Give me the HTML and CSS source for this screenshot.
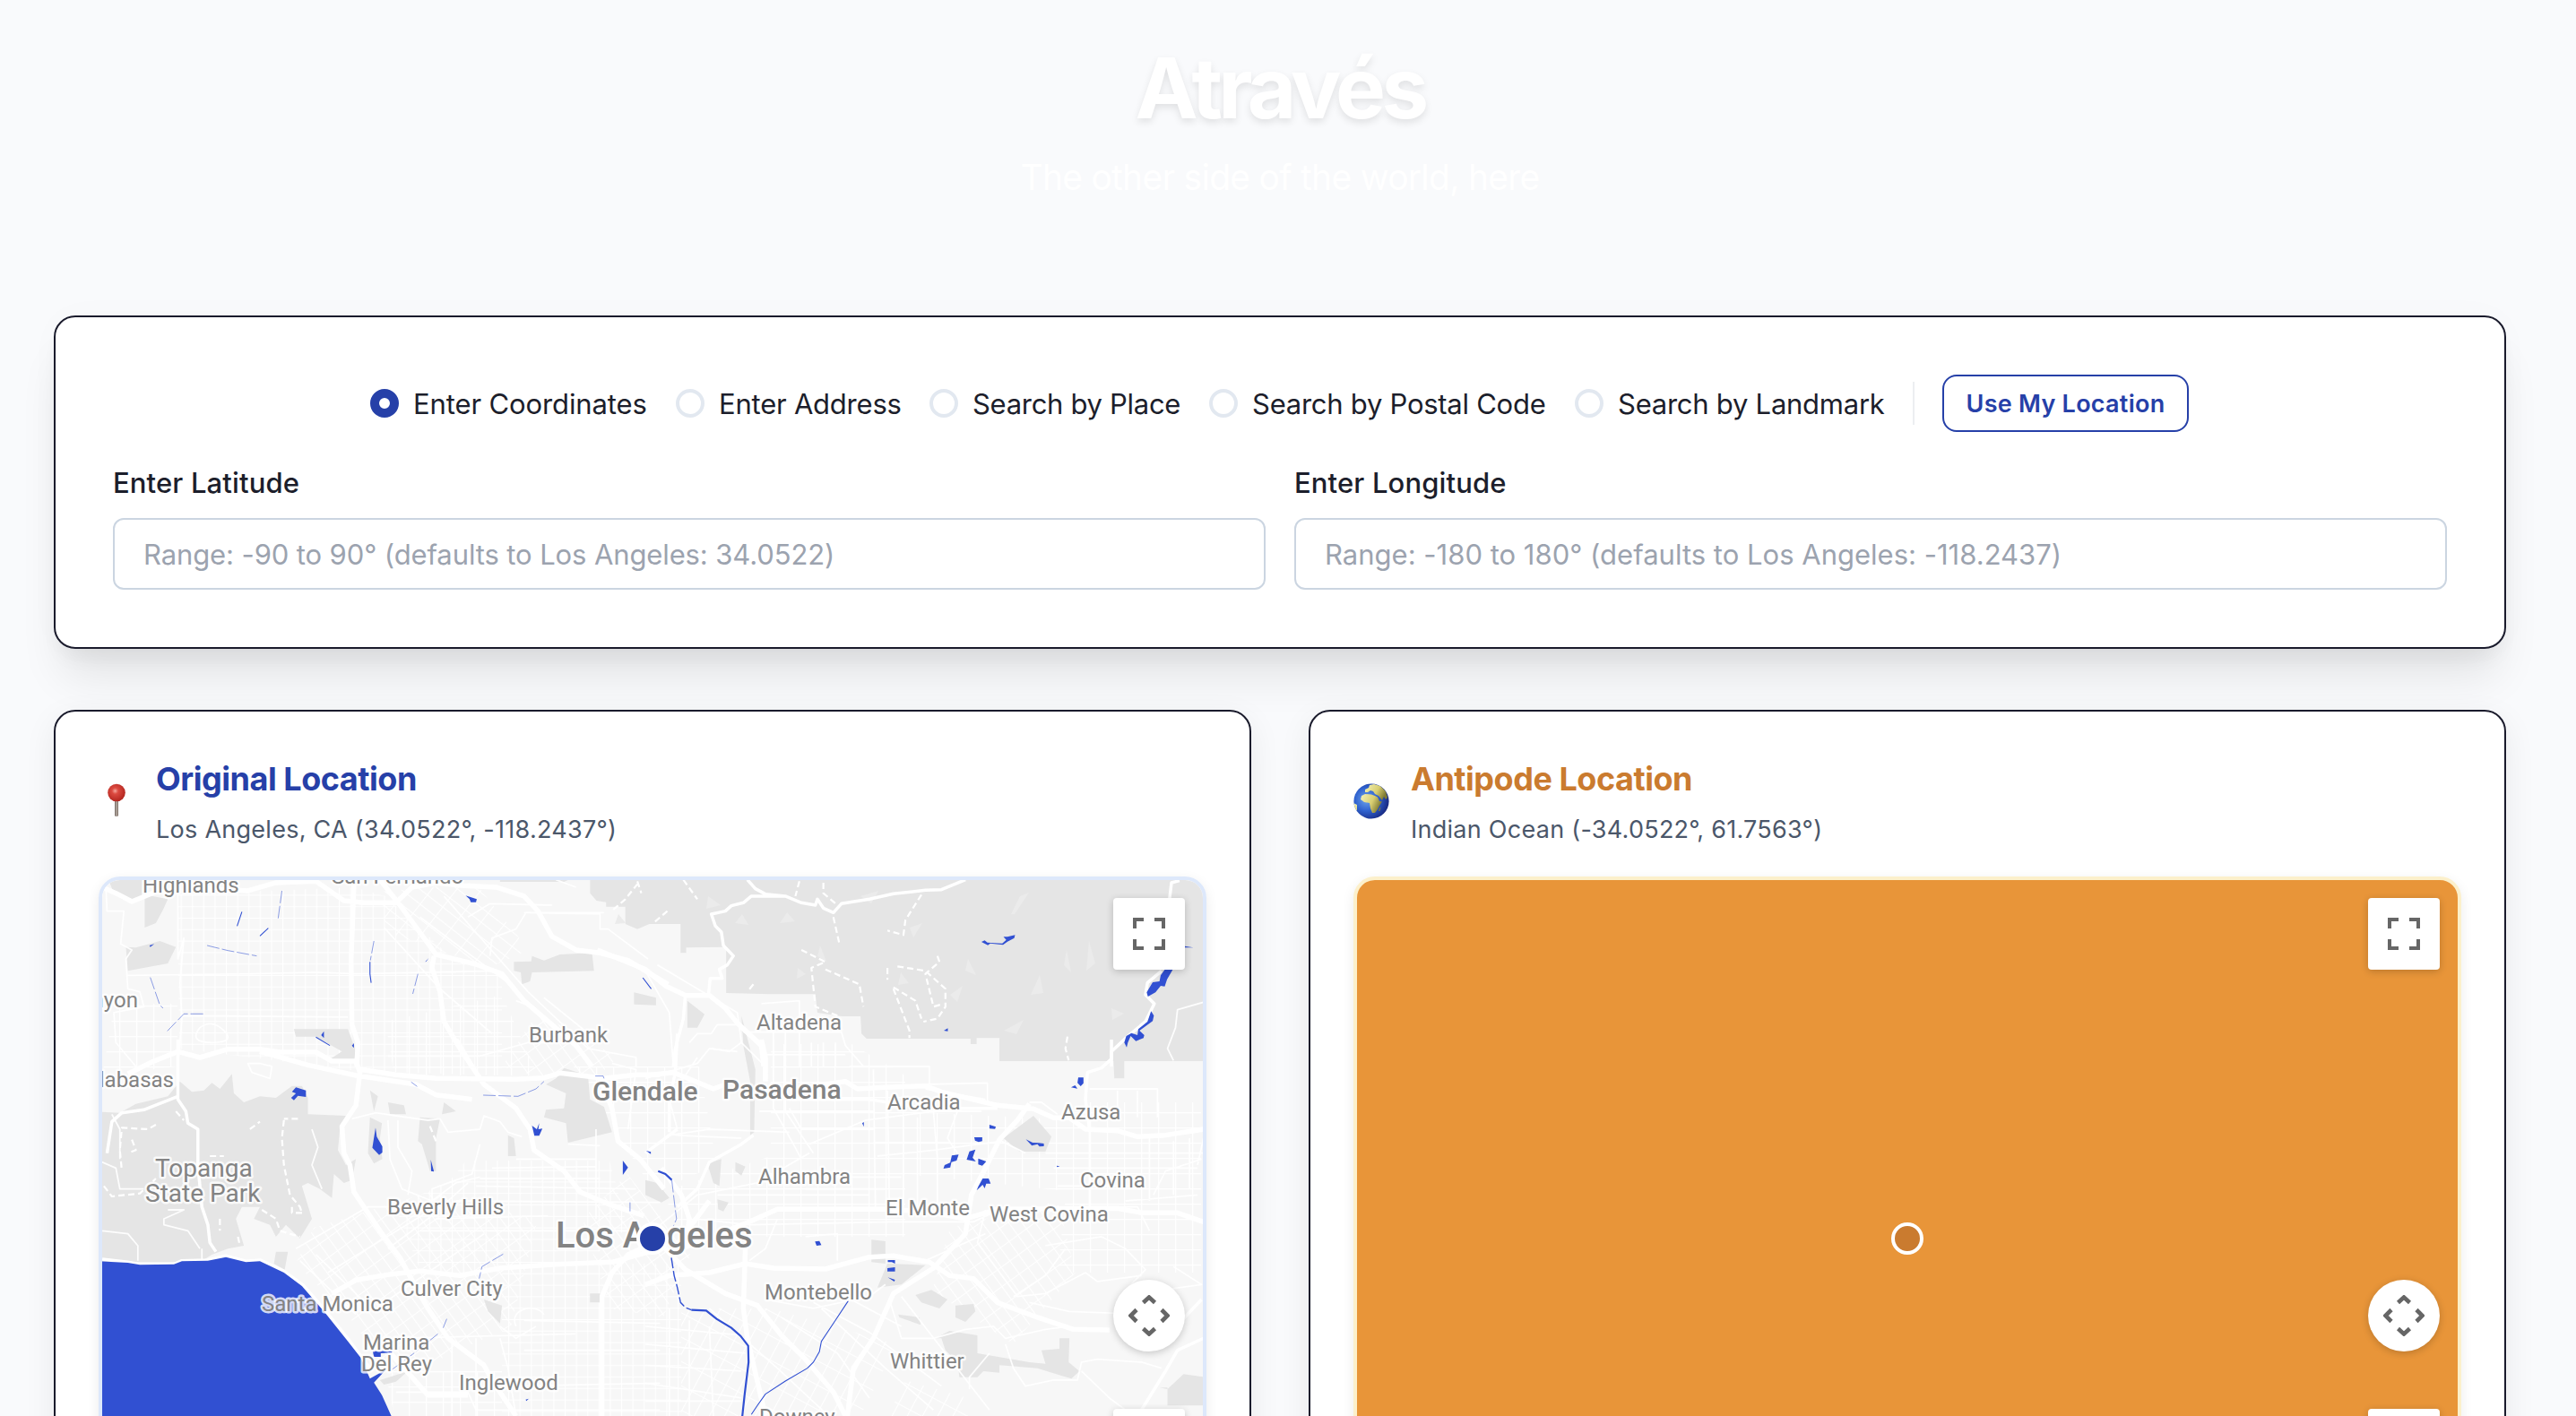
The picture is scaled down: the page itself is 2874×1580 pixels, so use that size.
FILE: index.html
```html
<!DOCTYPE html>
<html lang="en">
<head>
<meta charset="utf-8">
<title>Através</title>
<link rel="stylesheet" href="styles.css">
</head>
<body>
<header class="hero">
  <h1 class="hero-title">Através</h1>
  <p class="hero-sub">The other side of the world, here</p>
</header>
<main class="main">
  <section class="card search">
    <div class="modes">
      <label class="mode mode-coords"><span class="radio radio-on"></span><span>Enter Coordinates</span></label>
      <label class="mode mode-address"><span class="radio"></span><span>Enter Address</span></label>
      <label class="mode mode-place"><span class="radio"></span><span>Search by Place</span></label>
      <label class="mode mode-postal"><span class="radio"></span><span>Search by Postal Code</span></label>
      <label class="mode mode-landmark"><span class="radio"></span><span>Search by Landmark</span></label>
      <span class="divider"></span>
      <button class="locate" type="button">Use My Location</button>
    </div>
    <div class="fields">
      <div class="field">
        <label class="field-label" for="lat">Enter Latitude</label>
        <input class="field-input lat" id="lat" placeholder="Range: -90 to 90° (defaults to Los Angeles: 34.0522)">
      </div>
      <div class="field">
        <label class="field-label" for="lng">Enter Longitude</label>
        <input class="field-input lng" id="lng" placeholder="Range: -180 to 180° (defaults to Los Angeles: -118.2437)">
      </div>
    </div>
  </section>

  <div class="places">
    <section class="card place">
      <div class="place-head">
        <svg class="place-icon" viewBox="0 0 40 40">
          <defs>
            <radialGradient id="pinHead" cx=".42" cy=".4" r=".6"><stop offset="0" stop-color="#f5a79c"/><stop offset=".3" stop-color="#dc4a40"/><stop offset="1" stop-color="#b3261f"/></radialGradient>
            <linearGradient id="needle"><stop offset="0" stop-color="#6d635c"/><stop offset=".5" stop-color="#b9aea6"/><stop offset="1" stop-color="#77695f"/></linearGradient>
          </defs>
          <rect x="18" y="17" width="4" height="20" rx="1.6" fill="url(#needle)"/>
          <circle cx="20" cy="10.500" r="9.800" fill="url(#pinHead)"/>
        </svg>
        <div class="place-text">
          <h2 class="place-title original">Original Location</h2>
          <p class="place-sub">Los Angeles, CA (34.0522°, -118.2437°)</p>
        </div>
      </div>
      <div class="map map-original">
        <svg class="map-canvas" viewBox="114 982 1228 598" preserveAspectRatio="xMidYMin slice">
          <defs>
            <pattern id="grid" width="12.6" height="12.8" patternUnits="userSpaceOnUse"><path d="M0 0H12.6M0 0V12.8" stroke="#fff" stroke-width="2.2" fill="none"/></pattern>
            <pattern id="gridWide" width="19" height="17" patternUnits="userSpaceOnUse"><path d="M0 0H19M0 0V17" stroke="#fff" stroke-width="2.4" fill="none"/></pattern>
            <pattern id="gridTilt" width="12" height="18" patternUnits="userSpaceOnUse" patternTransform="rotate(-36)"><path d="M0 0H12M0 0V18" stroke="#fff" stroke-width="2.2" fill="none"/></pattern>
            <pattern id="gridDiag" width="13" height="22" patternUnits="userSpaceOnUse" patternTransform="rotate(-52)"><path d="M0 0H13M0 0V22" stroke="#fff" stroke-width="2.2" fill="none"/></pattern>
            <pattern id="gridSouth" width="15" height="24" patternUnits="userSpaceOnUse" patternTransform="rotate(28)"><path d="M0 0H15M0 0V24" stroke="#fff" stroke-width="2.2" fill="none"/></pattern>
          </defs>
          <rect x="114" y="982" width="1228" height="598" fill="#f7f7f7"/>

          <!-- street grids -->
          <path fill="url(#grid)" d="M198 998L395 990L430 1000L500 1065L560 1090V1200L400 1195L200 1170Z"/>
          <path fill="url(#gridWide)" d="M128 1120H198V1190L114 1200ZM560 1110L600 1200H440L430 1140Z"/>
          <path fill="url(#gridDiag)" d="M425 995L530 985L590 1060L545 1080L490 1060L430 1040Z"/>
          <path fill="url(#grid)" d="M520 1295H680L700 1370L640 1420H470L440 1345L500 1320Z"/>
          <path fill="url(#gridTilt)" d="M350 1370L480 1330L600 1360L570 1480L440 1540L390 1470L330 1410Z"/>
          <path fill="url(#gridTilt)" d="M650 1360L700 1310L770 1400L740 1470L680 1460Z"/>
          <path fill="url(#grid)" d="M560 1410H760V1580H560Z"/>
          <path fill="url(#gridWide)" d="M430 1530H560V1580H440ZM860 1165H950L1010 1200V1380H760L740 1330L860 1290ZM1200 1230H1340V1420H1180ZM1010 1240L1200 1250V1330L1010 1310ZM640 1190H780L800 1300L730 1330Z"/>
          <path fill="url(#gridTilt)" d="M1060 1370L1180 1340L1200 1420L1130 1500L1040 1440Z"/>
          <path fill="url(#gridSouth)" d="M760 1460L860 1460L1000 1500L960 1580H760ZM1010 1540L1080 1560V1580H990Z"/>
          <path fill="url(#gridTilt)" d="M600 1130L690 1180L650 1215L560 1190Z"/>

          <!-- parks and open land -->
          <g class="park">
            <g transform="translate(40 770) scale(.4464 .3333)">
              <path d="M180 630H266L265 690L240 712L215 700L195 680ZM272 685L330 700L318 735L300 780L272 795ZM225 860L250 862L310 840L350 860L330 915L230 940ZM1160 630H1340L1320 642H1160ZM1195 910L1238 908L1240 890L1270 905L1310 885L1390 880L1395 940L1240 945L1235 975L1215 985L1212 945L1195 940ZM1495 1012L1550 1030V1055L1495 1052ZM645 1135H780L800 1210L795 1245L735 1235L765 1210L700 1160L650 1160Z"/>
            </g>
            <g transform="translate(720 770) scale(.4464 .3333)">
              <path d="M-138 630H1400V1242H885V1165H828V1185H813V1167H553L540 1150L538 1092H490L430 1080L425 1018H310L202 1014V860L102 862V880H88V783H10L-20 800L-50 783V725H-98V710L-122 705L-138 680ZM105 1040L148 1085L130 1130H105Z"/>
            </g>
            <g transform="translate(40 1160) scale(.4464 .3333)">
              <path d="M160 242L210 245L250 215L330 190L360 140L390 175L420 170L440 145L460 165L490 115L495 180L520 210L560 190L600 195L640 155L665 155L680 195V250L775 255L760 300L755 370L775 420L800 400L790 470L770 480L745 450L740 530L710 500L680 480L665 490L690 600L660 665L625 620L600 660L585 620L545 600L560 560L515 560L500 600L520 690L480 700L440 720L410 745H160ZM835 260L865 280L860 330L866 400L845 415L830 380ZM960 260L1010 265L1000 330V440L985 440L965 350L955 340ZM1320 95L1380 120L1385 200L1420 225L1440 310L1330 345L1325 280L1270 260L1275 235L1320 230L1325 180L1275 150L1300 130ZM1180 320L1195 330L1200 390H1180ZM1120 870L1165 890L1160 950L1130 910ZM1385 850H1410V880H1385ZM600 710L630 710L622 770L595 750ZM835 170L855 190L845 240ZM880 210L920 220L925 250H885ZM1020 210L1050 240L1015 250ZM860 1140L930 1110L900 1145L870 1155Z"/>
            </g>
            <g transform="translate(720 1160) scale(.4464 .3333)">
              <path d="M565 670L600 675V750L565 745ZM605 750L700 755L640 820L580 830ZM895 330L970 255L1015 325L1000 375H935ZM675 855L715 838L755 870L735 900L690 880ZM775 890L820 885L825 910L800 945L775 930ZM632 920L685 930L688 955L635 930ZM740 1000L725 1000L760 975L830 990V1050L960 1080L1000 1085L990 1040L1035 1035V1000H1060L1058 1080L1085 1110L1065 1135L1040 1125L980 1100L885 1090V1115L845 1110L830 1130H785L780 1080L750 1040ZM1305 1170L1345 1120L1400 1130V1225H1305V1165H1285ZM155 415L190 400L185 490L170 480ZM225 410L250 425L240 455L225 440ZM180 535L208 545L195 575L182 568ZM240 -80L252 -20L275 100L272 310L262 320L262 140L245 20ZM0 470L30 480L60 530L40 545L0 520ZM1170 70H1197V130H1172Z"/>
            </g>
          </g>

          <!-- relief shading in the mountains -->
          <path class="relief" d="M790 1000l14 10-16 4zM870 1030l8-12 9 10zM915 1055l7 18-10-6zM960 1000l20-6-8 14zM1005 1085l9 12-12 2zM1128 1020l10-20 10-4-16 24zM1080 1070l9 18-12-5zM1190 1060l5 25-8-8zM1215 1050l7 25-10 8zM1060 1110l14-10-6 18zM890 1080l9 7-10 5zM1150 1110l10-22 4 20zM1240 1125l14 6-13 7zM820 1030l8-10 7 12zM1015 1035l14-5-10 16zM1120 1150l22-12-8 16zM690 1020l8 10-12 1z"/>

          <!-- minor roads -->
          <g class="road road-minor">
            <g transform="translate(40 770) scale(.4464 .3333)">
              <path d="M175 660L178 740L220 740L212 850L240 870L225 900L230 1000L260 1010L270 1060L195 1080L200 1180L250 1260M355 635V900L370 830L360 980L365 1100L355 1260M230 955L540 950L700 945L800 950L1150 940M365 1090L780 1095M1135 890L1140 830L1200 800L1225 745H1420M1080 760L1135 715L1290 720M1300 635L1350 660M1220 745L1410 750V800L1430 800L1530 900M1150 940L1240 1060L1200 1040M870 795L1010 1000L1140 1150M960 760L1180 980M1020 690L1230 1010M410 1130Q440 1100 470 1140T440 1180T410 1130M880 1225H1110L1230 1180H1400M1230 1010L1380 1200L1500 1230V1260M1270 1030L1400 1170"/>
            </g>
            <g transform="translate(720 770) scale(.4464 .3333)">
              <path d="M0 940L60 1080L70 1260M30 920L130 1000L230 1080L240 1180L300 1260M110 1180L130 1150L165 1150M165 1150L180 1120L230 1120M165 1200L210 1210L240 1180M245 1145H490L500 1190L545 1260M290 1050L385 1040V1140M300 1221H500M320 1145V1260M350 1145V1260M385 1145V1260M415 1180V1260M445 1180V1260M475 1180V1260M1395 1045L1330 1070L1325 1130L1305 1200L1320 1240"/>
            </g>
            <g transform="translate(40 1160) scale(.4464 .3333)">
              <path d="M255 740V690L230 650L166 640M210 400V300L190 250M415 700V740M165 410L200 430L210 500L270 500M330 570L370 570L320 600V620L380 640L410 700M690 300L705 360L690 420L715 500M790 265L850 245L900 255L980 270L1010 265L1030 310L1110 300L1120 255L1160 275L1180 310L1215 325M880 270L885 400L915 500L990 540M905 270V360L940 440L930 520M650 700L740 630L830 560H970L1050 480L1110 460M1110 350L1090 450L990 500V540M1110 465L1410 465M1140 430L1400 425M1200 400H1400M1100 490L1500 500M1050 540L1560 545M1000 600L1280 590M960 640L1300 640M880 700L980 600L1080 480M730 780L1000 560M850 900L1120 650M700 720L830 890M660 740L800 920M900 1000L1350 985M1040 1260V1000M1100 1260V1000M1160 1000L1180 1100L1200 1260M1220 1040H1560M1220 940L1560 950M900 1180H1080L1100 1240H1560M1190 1160L1560 1150M1330 350L1410 355M1440 80L1500 100L1480 300M1300 640L1560 640M1400 300V600M1200 960C1180 900 1250 880 1270 920M1160 960L1200 1000L1250 960M530 80L540 110L585 130L590 90L560 80Z"/>
            </g>
            <g transform="translate(720 1160) scale(.4464 .3333)">
              <path d="M0 130L130 80L160 30L230 40M75 320L240 330M80 300L60 200L130 60M60 320L160 300L360 310M320 0V230L370 350L390 400M350 0V240L420 380M360 230L390 300H570M285 240H570M510 90H710V150M570 100L575 560M605 170L610 560M410 350L550 270L720 240H840M780 240L755 330L780 380M580 390L720 370L890 340L950 380M645 250V560M680 260V560M720 240L730 400V560M570 345L760 345M470 460H640M400 500H600M0 660L130 520L280 480L410 380M180 520H560M120 600L260 620L620 610M330 600L300 700L260 740M400 660L480 650V740M620 610H820L900 560M700 150L855 145V210M700 165L850 200M1110 300V560L1230 560L1260 640M1110 165H1280V260M1180 170V260M1230 170V260M1200 540L1380 520M1270 520L1300 440L1390 400M1000 380H1395M1020 430H1380M1030 490H1230M960 210L990 210L1030 250M1320 340V520M1360 330V500M1260 330V540M1395 330L1380 420M850 570L830 680L930 860L1000 850L1100 780L1130 810L1240 790M1000 690L1140 660L1200 700L1250 770L1200 840M1230 850L1390 820L1320 760M960 880L1060 910L1250 920M920 860L1000 790L1050 700M700 740L800 680L850 650M610 870L640 1000H720L800 970L870 960L900 1000L1000 970L1060 960M860 1050L810 1130V1170M900 1020L920 1100L950 1160L1020 1140L1080 1140L1090 1080L1130 1070L1240 1080L1290 1100M1090 1110L1160 1200L1220 1260M640 860L750 1050L860 1240M160 900L330 1100L450 1250M0 960L240 990M0 1020L250 1050M0 1090L240 1110M0 1150L240 1200M0 1210H240M60 900V1260M110 940V1260M160 960L170 1260M420 880L560 980L740 1160M440 900L600 1100L720 1240M500 860L640 960M340 930L480 1050L560 1200M300 870L420 900L560 860L600 820"/>
            </g>
          </g>

          <!-- trails -->
          <g class="road trail">
            <g transform="translate(720 770) scale(.4464 .3333)">
              <path d="M95 635L130 700M385 640L375 690M445 645V680L480 720M55 740L20 780M690 685L650 770L645 820L605 805M470 760L485 850M390 870L450 910L415 930L425 1060L480 1090M450 935L535 985L545 1060M605 930V970M620 1000L660 1140L660 1165M630 925L700 940L750 1000V1060L730 1100L695 1110M730 890L735 910L700 950L720 1060L745 1050M620 995L675 1040L690 1100M1055 1160L1050 1200L1058 1240M270 985L255 1010M-20 640L-10 680M-80 735L-50 700L-20 650"/>
            </g>
            <g transform="translate(40 1160) scale(.4464 .3333)">
              <path d="M300 285L280 300L215 295L210 370L215 440M240 335L250 370L230 380M170 490L190 525L260 515L300 465M620 270L615 330L620 420L635 520L660 560L665 580M655 265H620M535 300L560 275M350 240L370 270M640 560L640 580L670 580M565 570L600 600L610 640L660 660M460 600V640M435 390H470M505 660L510 690M985 290L1000 340"/>
            </g>
          </g>

          <!-- highways -->
          <g class="road road-mid">
            <g transform="translate(720 770) scale(.4464 .3333)">
              <path d="M255 635L275 665L300 683L350 690L390 712L425 720L430 700L445 730L470 745L490 715L560 700L620 682L700 670L740 668L800 635M350 690H300L265 690L245 712L215 722L200 740L165 750L175 790L190 810L195 855L220 890L205 920L185 935L192 965L162 965L158 1020M1310 700L1315 645L1335 638M1290 940L1255 980L1250 1020L1272 1050L1250 1110L1205 1160L1165 1210V1260M100 1020L95 1100L75 1200L70 1260"/>
            </g>
            <g transform="translate(40 1160) scale(.4464 .3333)">
              <path d="M355 0V200L375 240L380 280L405 300V420L415 560L430 620L435 680L450 710M355 190L270 235L215 245L190 275L178 380M166 735L230 745L260 752L345 752L365 740L430 738L475 724L525 742L562 738L620 775L668 822L722 905L782 1005L835 1100"/>
            </g>
            <g transform="translate(720 1160) scale(.4464 .3333)">
              <path d="M80 -20L75 110L60 200V310M1165 0V65L1140 95L1105 110L1100 200L1110 300M270 320L240 350L160 410L130 500L80 560M0 380L80 300M1395 1000L1330 1040L1300 1110L1240 1240M1320 970L1390 870M360 200L560 200L700 230L880 230"/>
            </g>
          </g>
          <g class="road road-major">
            <g transform="translate(40 770) scale(.4464 .3333)">
              <path d="M166 660L200 680L240 708L300 675L360 670M430 665L530 672L600 645L700 640L770 705L820 712H900L940 660L1000 645L1070 655L1150 660L1220 690L1255 740L1290 825L1350 870L1410 880L1480 905L1580 985M795 650L788 900L790 1120L805 1180L802 1260M860 635L910 720L1000 885L1100 918L1165 950L1220 1040L1290 1120L1350 1190L1390 1260M995 890L990 930L1010 1010L1020 1110L1060 1200L1090 1260"/>
            </g>
            <g transform="translate(720 770) scale(.4464 .3333)">
              <path d="M-120 870L0 935L50 990L100 1022H160L200 1065L230 1115L290 1190L296 1260"/>
            </g>
            <g transform="translate(40 1160) scale(.4464 .3333)">
              <path d="M230 115L290 75L355 40L410 60L480 32L560 32L610 42L700 42L740 72L800 72L810 110L800 220L765 290L770 380L785 420L795 510L860 640L910 730L950 830L980 900L1030 1000L1120 1090L1140 1140L1200 1260M810 100L900 118L1000 130L1200 133L1270 128L1310 112L1420 130L1500 118H1560M560 40L680 85L800 120L950 150L1000 185L1090 200M1050 0L1090 90L1120 150L1200 230L1235 300L1245 370L1320 440L1360 510L1430 550L1520 590M1410 130L1440 230L1455 340L1510 400L1570 500M740 850L800 805L890 785L960 775L1060 790L1160 765L1300 752L1440 745L1560 700M1560 670L1480 720L1440 780L1415 860V1260M880 1040L980 1190H1080"/>
            </g>
            <g transform="translate(720 1160) scale(.4464 .3333)">
              <path d="M290 0L300 60V140M0 120L70 110L170 165L200 150M420 155L500 140L530 165L600 160L700 155L740 175L880 220L970 232L1020 262H1060L1100 300L1180 305L1230 325L1300 320L1395 300M40 430L90 520L110 600L100 700M960 215L930 270L885 335L850 430L815 520L800 650L720 765L620 850L570 1000L520 1100L505 1260M0 820L60 790L160 780L250 750L320 765L450 768L560 728L620 724L710 745L760 790L820 800L880 880L980 930L1070 970L1160 972M90 700L260 610L330 568H600L700 575L800 600L880 568L1180 565L1240 580L1330 580L1395 610M50 700L100 770L200 850L280 890L340 990L400 1070L470 1180L500 1260M250 700L245 900L255 1000L300 1260M60 720L160 540"/>
            </g>
          </g>

          <!-- water -->
          <g class="water">
            <g transform="translate(40 1160) scale(.4464 .3333)">
              <path d="M160 742L230 747L260 754L345 752L365 742L430 740L475 728L525 745L560 742L620 780L665 825L720 910L780 1010L812 1065L835 1135L875 1105L845 1148L865 1190L890 1265H160ZM650 160L675 170V192L655 188L645 203L638 195L650 180L640 175ZM849 295L852 325L866 358V378L858 386L841 362ZM987 402L995 442L988 440ZM1240 288L1252 300L1258 280L1256 300L1266 298L1258 322H1246ZM1467 405L1480 428L1467 453ZM842 1043L890 1042V1048L862 1050V1062H845ZM1224 1205L1232 1202L1226 1210ZM1525 372L1537 376L1537 383Z"/>
            </g>
            <g transform="translate(40 770) scale(.4464 .3333)">
              <path d="M1074 688L1102 700L1100 710H1087L1084 700ZM284 855L296 850L286 860ZM713 1155L720 1142V1165ZM973 910L982 897L976 908ZM790 1190L795 1182V1198Z"/>
            </g>
            <g transform="translate(720 770) scale(.4464 .3333)">
              <path d="M840 843L848 838L855 845L892 848L902 836L895 826H905L924 820L922 830L905 842L894 853L862 848L856 854ZM1298 936H1318L1304 968L1298 992L1288 990L1275 1012L1256 1026L1253 1012L1268 978L1285 975L1288 955ZM1264 1075L1271 1090L1268 1108L1235 1140L1247 1155L1245 1165L1226 1175L1213 1158L1206 1180L1203 1196L1197 1180L1202 1158L1215 1148L1230 1155L1232 1135L1255 1110ZM746 1140L756 1132V1142ZM1348 857L1370 862L1348 862Z"/>
            </g>
            <g transform="translate(720 1160) scale(.4464 .3333)">
              <path d="M424 676L435 674L440 688L428 690ZM606 738H624V750L616 745H606ZM605 765L624 762V776H605ZM606 796L624 804L622 810ZM860 285L876 292L874 299L860 298ZM822 327H842V340L833 343L824 338ZM810 374L825 368L818 395L826 408L803 402ZM832 398L852 408L842 422L832 418ZM766 388L783 385L778 405L765 410L762 428L745 432L748 420L762 412ZM843 465L858 465L863 482L852 482L848 498L843 486L828 505L832 492ZM951 334L968 345L982 346L996 348V357L985 358L980 350L966 355ZM1028 422L1036 424L1029 427ZM1082 127H1095V146L1088 156L1080 145ZM1064 160L1074 153L1080 164ZM542 280L546 276V292Z"/>
            </g>
          </g>
          <g class="river">
            <g transform="translate(720 1160) scale(.4464 .3333)">
              <path class="river-upper" d="M65 730L72 790L80 830L88 880L100 897L115 905"/>
              <path class="river-main" d="M115 905L152 907L178 935L215 965L238 992L257 1025L258 1080L248 1190L242 1265"/>
              <path d="M507 875L475 940L440 1010L435 1045L420 1080L405 1100L350 1143L300 1187L280 1225L265 1255"/>
              <path class="river-main" d="M32 440L50 450L66 470"/>
              <path class="river-faint" d="M66 470L74 560L78 600L70 625"/>
            </g>
            <g transform="translate(40 770) scale(.4464 .3333)">
              <path d="M515 742L503 790M581 797L560 823M835 910V950L838 980M700 1162L735 1190M1517 963L1538 1000"/>
              <path class="river-faint" d="M615 672L605 770M428 855L480 872L552 890M286 962L310 1055L318 1065M418 1084H370L326 1145M955 950L942 1017M845 840L836 905"/>
            </g>
            <g transform="translate(40 1160) scale(.4464 .3333)">
              <path class="river-faint" d="M1118 186L1205 190L1250 165L1270 140M1398 122H1418L1420 130M938 142L953 157M1168 718L1115 760L1108 800M1485 545V575M1027 935L1018 965M890 1105L950 1045L1005 985"/>
            </g>
          </g>

          <!-- place names -->
          <g class="label">
            <text x="159" y="995.500">Highlands</text>
            <text x="370" y="986">San Fernando</text>
            <text x="154" y="1124" text-anchor="end">Canyon</text>
            <text x="194" y="1213" text-anchor="end">Calabasas</text>
            <text x="590" y="1163">Burbank</text>
            <text x="844" y="1149">Altadena</text>
            <text x="990" y="1238">Arcadia</text>
            <text x="1184" y="1249">Azusa</text>
            <text x="846" y="1321">Alhambra</text>
            <text x="1205" y="1325">Covina</text>
            <text x="988" y="1356">El Monte</text>
            <text x="1104" y="1363">West Covina</text>
            <text x="853" y="1450">Montebello</text>
            <text x="993" y="1527">Whittier</text>
            <text x="847" y="1589">Downey</text>
            <text x="432" y="1355">Beverly Hills</text>
            <text x="447" y="1446">Culver City</text>
            <text x="292" y="1463">Santa Monica</text>
            <text x="405" y="1506">Marina</text>
            <text x="403" y="1530">Del Rey</text>
            <text x="512" y="1551">Inglewood</text>
            <text class="label-park" x="173" y="1313">Topanga</text>
            <text class="label-park" x="162" y="1341">State Park</text>
            <text class="label-town" x="661" y="1228">Glendale</text>
            <text class="label-town" x="806" y="1226">Pasadena</text>
            <text class="label-city" x="620" y="1392">Los Angeles</text>
          </g>
        </svg>
        <span class="marker marker-original"></span>
        <div class="controls">
          <span class="control control-full"><svg viewBox="0 0 36 36" width="36" height="36"><path d="M2 12V2H12M24 2H34V12M34 24V34H24M12 34H2V24" fill="none" stroke="#666" stroke-width="4"/></svg></span>
          <span class="control control-pan"><svg viewBox="0 0 46 46" width="46" height="46"><path d="M16.500 8.500L23 2.500L29.500 8.500M16.500 37.500L23 43.500L29.500 37.500M9 16.500L2.500 23L9 29.500M37 16.500L43.500 23L37 29.500" fill="none" stroke="#666" stroke-width="4.600"/></svg></span>
          <span class="control control-zoom"></span>
        </div>
      </div>
    </section>

    <section class="card place">
      <div class="place-head">
        <svg class="place-icon" viewBox="0 0 40 40">
          <defs>
            <radialGradient id="sea" cx=".36" cy=".45" r=".66"><stop offset="0" stop-color="#6fa6ec"/><stop offset=".5" stop-color="#2f62cf"/><stop offset="1" stop-color="#16257d"/></radialGradient>
            <linearGradient id="land" x1="0" y1="0" x2="1" y2=".4"><stop offset="0" stop-color="#f3f2b8"/><stop offset=".6" stop-color="#d9cf72"/><stop offset="1" stop-color="#7f7a33"/></linearGradient>
            <clipPath id="disc"><circle cx="20" cy="20" r="19.600"/></clipPath>
          </defs>
          <circle cx="20" cy="20" r="19.600" fill="url(#sea)"/>
          <g clip-path="url(#disc)" fill="url(#land)">
            <path d="M9 14L13 12L20 12.500L24 14L27 15.500L29 20L32 20.500L29 25L27 29L24 33H21L19 28L18 22L12 21L8 18Z"/>
            <path d="M13 10L13 7L17 5L18 2L23 1L30 3L36 9L38 16L36 18L34 15L32 19L28 14L24 12L22 9L19 8L16 10Z"/>
            <path d="M0 22L4 24L4 30L2 30ZM29 28L30.500 26.500L29.500 31L28 31Z"/>
          </g>
        </svg>
        <div class="place-text">
          <h2 class="place-title antipode">Antipode Location</h2>
          <p class="place-sub">Indian Ocean (-34.0522°, 61.7563°)</p>
        </div>
      </div>
      <div class="map map-antipode">
        <span class="marker marker-antipode"></span>
        <div class="controls">
          <span class="control control-full"><svg viewBox="0 0 36 36" width="36" height="36"><path d="M2 12V2H12M24 2H34V12M34 24V34H24M12 34H2V24" fill="none" stroke="#666" stroke-width="4"/></svg></span>
          <span class="control control-pan"><svg viewBox="0 0 46 46" width="46" height="46"><path d="M16.500 8.500L23 2.500L29.500 8.500M16.500 37.500L23 43.500L29.500 37.500M9 16.500L2.500 23L9 29.500M37 16.500L43.500 23L37 29.500" fill="none" stroke="#666" stroke-width="4.600"/></svg></span>
          <span class="control control-zoom"></span>
        </div>
      </div>
    </section>
  </div>
</main>
</body>
</html>
```
FILE: styles.css
```css
* { box-sizing: border-box; }
html { height: 100%; overflow: hidden; }
body {
  margin: 0;
  height: 1580px;
  overflow: hidden;
  background: #f9fafc;
  color: #1c1e2b;
  font-family: Inter, "Liberation Sans", sans-serif;
}
h1, h2, p { margin: 0; }

.hero {
  width: 2856px;
  height: 352px;
  padding-top: 42px;
  text-align: center;
  color: #fff;
}
.hero-title {
  font-size: 94px;
  line-height: 112px;
  font-weight: 700;
  letter-spacing: -4.6px;
  text-shadow: 0 4px 8px rgba(0, 0, 0, .1);
}
.hero-sub {
  margin-top: 14px;
  font-size: 39px;
  line-height: 60px;
  letter-spacing: -.74px;
}

.main { width: 2856px; padding: 0 60px; }
.card {
  background: #fff;
  border: 2px solid #1a1b2c;
  border-radius: 24px;
}
.search {
  height: 372px;
  padding: 64px;
  box-shadow: 0 40px 50px -10px rgba(0, 0, 0, .09), 0 16px 24px -8px rgba(0, 0, 0, .05), 0 0 40px rgba(0, 0, 0, .02);
}
.modes {
  display: flex;
  align-items: center;
  height: 64px;
  padding-left: 287px;
  font-size: 31px;
}
.mode {
  display: flex;
  align-items: center;
  gap: 16px;
  white-space: nowrap;
  letter-spacing: -.3px;
}
.mode-coords { width: 341px; letter-spacing: -.12px; }
.mode-address { width: 283px; letter-spacing: -.22px; }
.mode-place { width: 312px; }
.mode-postal { width: 408px; letter-spacing: -.26px; }
.mode-landmark { width: 377px; letter-spacing: -.25px; }
.radio {
  flex: none;
  width: 32px;
  height: 32px;
  border: 4px solid #e2e8f0;
  border-radius: 50%;
}
.radio-on { border: 10px solid #2640a8; }
.divider { width: 2px; height: 48px; background: #eceef1; }
.locate {
  width: 275px;
  height: 64px;
  margin-left: 31px;
  padding: 0;
  border: 2px solid #2640a8;
  border-radius: 16px;
  background: #fff;
  color: #2640a8;
  font: 600 27px Inter, sans-serif;
  letter-spacing: .26px;
}
.fields {
  display: grid;
  grid-template-columns: 1fr 1fr;
  gap: 32px;
  margin-top: 37px;
}
.field-label {
  display: block;
  margin-bottom: 19px;
  font-size: 31px;
  line-height: 40px;
  font-weight: 500;
  letter-spacing: .14px;
}
.field-input {
  display: block;
  width: 100%;
  height: 80px;
  padding: 0 32px;
  border: 2px solid #cbd5e1;
  border-radius: 12px;
  background: #fff;
  font: 400 31px Inter, sans-serif;
}
.field-input::placeholder { color: #9ca3af; opacity: 1; }
.lat { letter-spacing: -.11px; }
.lng { letter-spacing: .01px; }

.places {
  display: grid;
  grid-template-columns: 1fr 1fr;
  gap: 64px;
  margin-top: 68px;
}
.place {
  height: 1200px;
  padding: 51px 48px 0;
  box-shadow: 0 10px 36px rgba(0, 0, 0, .07);
}
.place-head {
  display: flex;
  align-items: center;
  gap: 24px;
  height: 100px;
  margin-bottom: 33px;
}
.place-icon { flex: none; width: 40px; height: 40px; margin-top: -2px; }
.place-text { display: flex; flex-direction: column; gap: 13px; padding-top: 1px; }
.place-title {
  font-size: 36px;
  line-height: 48px;
  font-weight: 700;
  letter-spacing: -.47px;
}
.original { color: #2640a8; }
.antipode { color: #ca7b2f; }
.place-sub {
  color: #4b576a;
  font-size: 27px;
  line-height: 40px;
  letter-spacing: .27px;
}

.map {
  position: relative;
  height: 1000px;
  overflow: hidden;
  border: 4px solid #dde8fb;
  border-radius: 24px;
  box-shadow: 0 4px 14px rgba(0, 0, 0, .08);
}
.map-antipode { border-color: #fcf0cb; background: #e89539; }
.map-canvas { display: block; width: 1228px; height: 598px; }
.marker {
  position: absolute;
  left: 596px;
  top: 382px;
  width: 36px;
  height: 36px;
  border: 4px solid #fff;
  border-radius: 50%;
}
.marker-original { background: #2640a8; }
.marker-antipode { background: #ca7b2f; }
.controls {
  position: absolute;
  top: 20px;
  right: 20px;
  display: flex;
  flex-direction: column;
}
.control {
  display: flex;
  align-items: center;
  justify-content: center;
  width: 80px;
  height: 80px;
  border-radius: 4px;
  background: #fff;
  box-shadow: 0 2px 8px rgba(0, 0, 0, .2);
}
.control-pan { margin-top: 346px; border-radius: 50%; }
.control-zoom { margin-top: 64px; height: 162px; }

.park { fill: #e5e5e5; }
.relief { fill: #ebebeb; }
.road { fill: none; stroke: #fff; stroke-linejoin: round; }
.road path, .river path { vector-effect: non-scaling-stroke; }
.road-minor { stroke-width: 1.8px; stroke-opacity: .9; }
.trail { stroke-width: 2.2px; stroke-dasharray: 7 4; }
.road-mid { stroke-width: 3.5px; }
.road-major { stroke-width: 5.5px; }
.water { fill: #3150d2; }
.river { fill: none; stroke: #3150d2; stroke-width: 1.1px; }
.river-upper { stroke-width: 1.4px; stroke-dasharray: 12 3; }
.river-main { stroke-width: 2.2px; }
.river-faint { stroke-width: 1px; stroke-opacity: .55; stroke-dasharray: 14 3; }
.label {
  fill: #838383;
  stroke: rgba(255, 255, 255, .8);
  stroke-width: 5px;
  stroke-linejoin: round;
  paint-order: stroke;
  font: 400 24px Roboto, sans-serif;
}
.label-park { font-size: 28px; }
.label-town { font-size: 30px; font-weight: 500; }
.label-city { font-size: 40px; font-weight: 500; }
```
